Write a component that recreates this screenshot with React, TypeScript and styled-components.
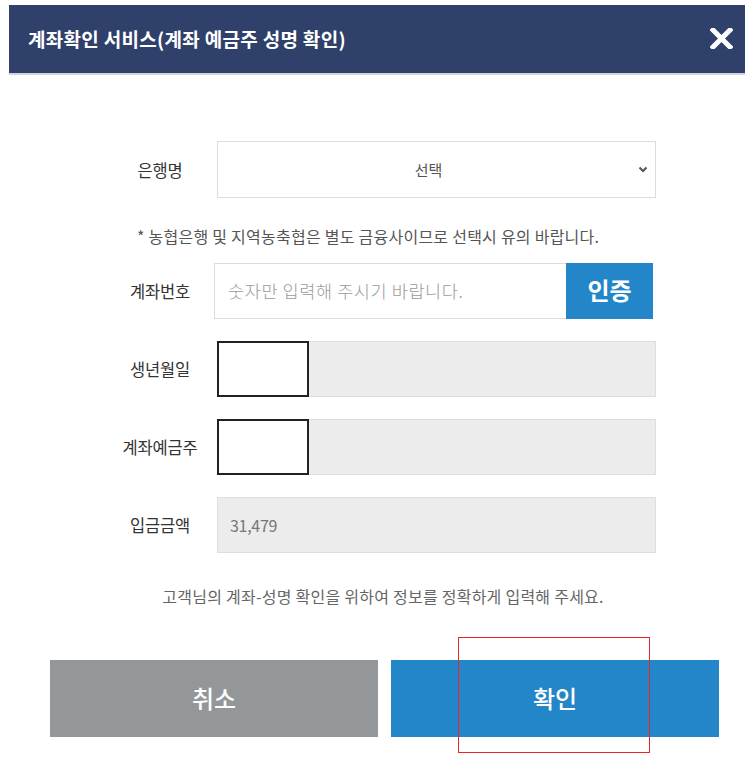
import React from "react";
import styled, { createGlobalStyle } from "styled-components";

const Global = createGlobalStyle`
  html, body { margin: 0; padding: 0; background: #fff; overflow: hidden; }
  body { font-family: "Noto Sans CJK KR", "Noto Sans", sans-serif; }
  * { box-sizing: border-box; }
`;

const Page = styled.div`
  position: relative;
  width: 745px;
  height: 759px;
  padding: 5px 0 0 9px;
`;

const Header = styled.div`
  height: 70px;
  background: #2f406a;
  border-bottom: 2px solid #cdd4df;
  display: flex;
  align-items: center;
  justify-content: space-between;
  padding: 0 12px 2px 19px;
`;

const Title = styled.h1`
  margin: 0;
  color: #fff;
  font-size: 19px;
  font-weight: 700;
  letter-spacing: 0.3px;
`;

const CloseBtn = styled.button`
  border: 0;
  background: none;
  padding: 0;
  width: 23px;
  height: 21px;
  display: flex;
  cursor: pointer;
`;

const Form = styled.div`
  width: 546px;
  margin-left: 101px;
  display: flex;
  flex-direction: column;
`;

const Row = styled.div<{ $top: number }>`
  display: grid;
  grid-template-columns: 100px 439px;
  column-gap: 7px;
  align-items: center;
  margin-top: ${(p) => p.$top}px;
`;

const NoteRow = styled.div<{ $top: number }>`
  margin-top: ${(p) => p.$top}px;
`;

const Label = styled.div`
  text-align: center;
  font-size: 16.5px;
  color: #333;
  letter-spacing: -0.2px;
`;

const SelectBox = styled.div`
  height: 57px;
  border: 1px solid #dcdcdc;
  background: #fff;
  display: flex;
  align-items: center;
  justify-content: center;
  position: relative;
  font-size: 15px;
  color: #555;
  padding-right: 16px;
`;

const Chevron = styled.svg`
  position: absolute;
  right: 7px;
  top: 24px;
`;

const Note = styled.p<{ $center?: boolean }>`
  margin: 0;
  font-size: 16px;
  line-height: 20px;
  color: ${(p) => (p.$center ? "#666" : "#555")};
  letter-spacing: 0.25px;
  text-align: ${(p) => (p.$center ? "center" : "left")};
  padding-left: ${(p) => (p.$center ? 0 : 27)}px;
`;

const AccountGroup = styled.div`
  display: flex;
  width: 439px;
  height: 56px;
  margin-left: -3px;
`;

const AccountInput = styled.input`
  flex: 1;
  min-width: 0;
  height: 100%;
  border: 1px solid #dcdcdc;
  border-right: 0;
  padding: 0 0 2px 13px;
  font-family: inherit;
  font-size: 17.5px;
  font-weight: 300;
  letter-spacing: 0.6px;
  color: #333;
  outline: none;
  &::placeholder { color: #9a9a9a; }
`;

const AuthButton = styled.button`
  width: 87px;
  height: 100%;
  border: 0;
  background: #2386c9;
  color: #fff;
  font-family: inherit;
  font-size: 24px;
  font-weight: 700;
  padding: 0 0 3px;
`;

const GrayField = styled.div`
  height: 56px;
  display: flex;
  background: #ececec;
  border: 1px solid #dedede;
  align-items: center;
  font-size: 16px;
  color: #777;
  padding-left: 12px;
  letter-spacing: -0.3px;
`;

const MaskedField = styled.div`
  height: 56px;
  display: flex;
`;

const WhiteBox = styled.div`
  width: 92px;
  height: 100%;
  border: 2px solid #222;
  background: #fff;
`;

const GrayRest = styled.div`
  flex: 1;
  height: 100%;
  background: #ececec;
  border: 1px solid #dedede;
  border-left: 0;
`;

const Buttons = styled.div`
  display: flex;
  gap: 13px;
  margin: 54px 0 0 41px;
`;

const ActionButton = styled.button<{ $primary?: boolean }>`
  width: 328px;
  height: 77px;
  border: 0;
  background: ${(p) => (p.$primary ? "#2386c9" : "#939799")};
  color: #fff;
  font-family: inherit;
  font-size: 24px;
  font-weight: 500;
  padding: 0 0 3px;
`;

const Highlight = styled.div`
  position: absolute;
  left: 458px;
  top: 637px;
  width: 192px;
  height: 116px;
  border: 1px solid #e8262a;
  pointer-events: none;
`;

export default function App() {
  return (
    <Page>
      <Global />
      <Header>
        <Title>계좌확인 서비스(계좌 예금주 성명 확인)</Title>
        <CloseBtn aria-label="닫기">
          <svg width="23" height="21" viewBox="0 0 23 21">
            <path d="M3 2 L20 19 M20 2 L3 19" stroke="#fff" strokeWidth="5" strokeLinecap="square" />
          </svg>
        </CloseBtn>
      </Header>
      <Form>
        <Row $top={66}>
          <Label>은행명</Label>
          <SelectBox>
            선택
            <Chevron width="10" height="7" viewBox="0 0 10 7">
              <path d="M1.5 1.5 L5 5 L8.5 1.5" fill="none" stroke="#555" strokeWidth="2" />
            </Chevron>
          </SelectBox>
        </Row>
        <NoteRow $top={28}>
          <Note>* 농협은행 및 지역농축협은 별도 금융사이므로 선택시 유의 바랍니다.</Note>
        </NoteRow>
        <Row $top={17}>
          <Label>계좌번호</Label>
          <AccountGroup>
            <AccountInput placeholder="숫자만 입력해 주시기 바랍니다." />
            <AuthButton>인증</AuthButton>
          </AccountGroup>
        </Row>
        <Row $top={22}>
          <Label>생년월일</Label>
          <MaskedField>
            <WhiteBox />
            <GrayRest />
          </MaskedField>
        </Row>
        <Row $top={22}>
          <Label>계좌예금주</Label>
          <MaskedField>
            <WhiteBox />
            <GrayRest />
          </MaskedField>
        </Row>
        <Row $top={22}>
          <Label>입금금액</Label>
          <GrayField>31,479</GrayField>
        </Row>
        <NoteRow $top={33}>
          <Note $center>고객님의 계좌-성명 확인을 위하여 정보를 정확하게 입력해 주세요.</Note>
        </NoteRow>
      </Form>
      <Buttons>
        <ActionButton>취소</ActionButton>
        <ActionButton $primary>확인</ActionButton>
      </Buttons>
      <Highlight />
    </Page>
  );
}
